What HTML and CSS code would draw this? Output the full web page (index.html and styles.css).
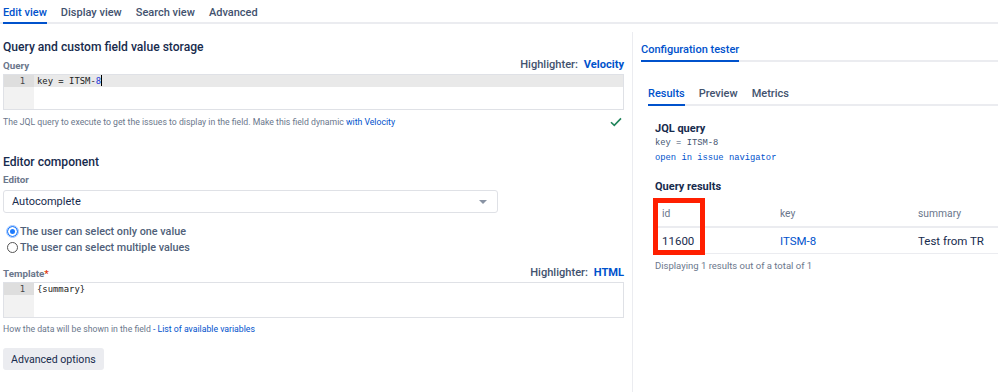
FILE: index.html
```html
<!DOCTYPE html>
<html lang="en">
<head>
    <meta charset="UTF-8">
    <meta name="viewport" content="width=device-width, initial-scale=1.0">
    <title>Field configuration</title>
    <link rel="stylesheet" href="styles.css">
</head>
<body>
    <div class="tabs main-tabs">
        <div class="tab active">Edit view</div>
        <div class="tab">Display view</div>
        <div class="tab">Search view</div>
        <div class="tab">Advanced</div>
    </div>

    <div class="page">
        <div class="editor-col">
            <h2>Query and custom field value storage</h2>
            <div class="field-head">
                <span class="label">Query</span>
                <span class="highlighter">Highlighter: <a>Velocity</a></span>
            </div>
            <div class="code-box">
                <div class="gutter"><div class="ln active">1</div></div>
                <div class="lines">
                    <div class="line active">key = ITSM-<span class="num">8</span><span class="cursor"></span></div>
                </div>
            </div>
            <div class="help">
                <span>The JQL query to execute to get the issues to display in the field. Make this field dynamic <a>with Velocity</a></span>
                <svg class="check" width="12" height="10" viewBox="0 0 12 10"><path d="M1 5.2 L4.3 8.4 L11 1.4" fill="none" stroke="#1f845a" stroke-width="1.6"/></svg>
            </div>

            <h2 class="second">Editor component</h2>
            <div class="label">Editor</div>
            <div class="select">
                <span>Autocomplete</span>
                <span class="caret"></span>
            </div>
            <div class="radios">
                <label class="radio"><span class="dot checked"></span>The user can select only one value</label>
                <label class="radio"><span class="dot"></span>The user can select multiple values</label>
            </div>

            <div class="field-head template">
                <span class="label">Template<span class="req">*</span></span>
                <span class="highlighter">Highlighter: <a>HTML</a></span>
            </div>
            <div class="code-box">
                <div class="gutter"><div class="ln active">1</div></div>
                <div class="lines">
                    <div class="line plain">{summary}</div>
                </div>
            </div>
            <div class="help second-help">
                <span>How the data will be shown in the field <a>- List of available variables</a></span>
            </div>

            <button class="btn">Advanced options</button>
        </div>

        <div class="tester">
            <div class="tabs tester-tabs">
                <div class="tab active">Configuration tester</div>
            </div>
            <div class="tabs result-tabs">
                <div class="tab active">Results</div>
                <div class="tab">Preview</div>
                <div class="tab">Metrics</div>
            </div>
            <div class="results">
                <h3>JQL query</h3>
                <div class="mono">key = ITSM-8</div>
                <div class="mono link">open in issue navigator</div>

                <h3 class="second">Query results</h3>
                <div class="table-wrap">
                    <table>
                        <tr><th>id</th><th>key</th><th>summary</th></tr>
                        <tr><td>11600</td><td><a>ITSM-8</a></td><td>Test from TR</td></tr>
                    </table>
                    <div class="mark"></div>
                </div>
                <div class="count">Displaying 1 results out of a total of 1</div>
            </div>
        </div>
    </div>
</body>
</html>
```

FILE: styles.css
```css
body {
    margin: 0;
    font-family: 'Roboto', 'Liberation Sans', sans-serif;
    color: #172b4d;
    background: #fff;
}
a {
    color: #0052cc;
}
.tabs {
    display: flex;
    border-bottom: 2px solid #ebecf0;
}
.tab {
    font-size: 11px;
    font-weight: 500;
    line-height: 14px;
    color: #42526e;
    padding-bottom: 2px;
    margin-bottom: -2px;
    border-bottom: 2px solid transparent;
    margin-right: 14px;
}
.tab.active {
    color: #0052cc;
    border-bottom-color: #0052cc;
}
.main-tabs {
    padding: 6px 0 0 3px;
}
.page {
    display: grid;
    grid-template-columns: 632px 1fr;
}
.editor-col {
    padding: 15px 8px 0 3px;
}
h2 {
    font-size: 12.1px;
    font-weight: 500;
    line-height: 16px;
    margin: 0 0 3px;
}
h2.second {
    margin-top: 26px;
}
.field-head {
    display: flex;
    justify-content: space-between;
    align-items: flex-end;
    margin-bottom: 2px;
}
.field-head.template {
    margin-top: 11px;
}
.label {
    font-size: 9.8px;
    font-weight: 700;
    line-height: 13px;
    color: #6b778c;
}
.req {
    color: #de350b;
}
.highlighter {
    font-size: 11.1px;
    line-height: 14px;
    color: #42526e;
    font-weight: 500;
}
.highlighter a {
    margin-left: 3px;
    font-weight: 700;
}
.code-box {
    display: flex;
    height: 34px;
    border: 1px solid #dfe1e6;
    font-family: 'DejaVu Sans Mono', monospace;
    font-size: 8.9px;
}
.gutter {
    width: 30px;
    background: #f2f2f2;
    text-align: right;
}
.ln {
    padding-right: 9px;
    line-height: 12px;
    color: #444;
}
.ln.active {
    background: #dedede;
}
.lines {
    flex: 1;
}
.line {
    line-height: 12px;
    padding-left: 3px;
    color: #222;
}
.line.active {
    background: #e9e9e9;
}
.num {
    color: #1d3bd9;
}
.cursor {
    display: inline-block;
    width: 1px;
    height: 11px;
    background: #000;
    vertical-align: -2px;
}
.help {
    display: flex;
    justify-content: space-between;
    align-items: center;
    font-size: 8.7px;
    line-height: 12px;
    color: #6b778c;
    margin-top: 6px;
}
.help.second-help {
    margin-top: 5px;
}
.check {
    margin-right: 2px;
}
.label + .select {
    margin-top: 4px;
}
.select {
    width: 477px;
    height: 21px;
    border: 1px solid #dfe1e6;
    border-radius: 3px;
    display: flex;
    align-items: center;
    justify-content: space-between;
    padding: 0 8px;
    font-size: 11px;
}
.caret {
    width: 0;
    height: 0;
    border-left: 4px solid transparent;
    border-right: 4px solid transparent;
    border-top: 4px solid #8993a4;
    margin-right: 2px;
}
.radios {
    margin-top: 10px;
}
.radio {
    display: flex;
    align-items: center;
    font-size: 10.8px;
    color: #505f79;
    font-weight: 500;
    height: 16px;
}
.dot {
    width: 9px;
    height: 9px;
    border: 1px solid #555;
    border-radius: 50%;
    margin: 0 2px 0 4px;
}
.dot.checked {
    background: #1d7afc;
    border-color: #1d7afc;
    box-shadow: inset 0 0 0 2px #fff;
    outline: 1px solid #9bc3ff;
}
.btn {
    margin-top: 13px;
    background: #ebecf0;
    border: none;
    border-radius: 3px;
    font-family: inherit;
    font-size: 10.6px;
    color: #172b4d;
    padding: 0 8px;
    height: 22px;
}
.tester {
    margin-top: 8px;
    border-left: 1px solid #ebecf0;
    min-height: 360px;
}
.tester-tabs {
    margin-left: 8px;
    padding-top: 11px;
}
.tester-tabs .tab {
    padding-bottom: 3px;
}
.result-tabs {
    margin: 25px 0 0 15px;
}
.result-tabs .tab {
    padding-bottom: 3px;
}
.results {
    padding: 16px 0 0 22px;
}
h3 {
    font-size: 11px;
    font-weight: 700;
    line-height: 14px;
    margin: 0;
}
h3.second {
    margin-top: 14px;
}
.mono {
    font-family: 'Liberation Mono', monospace;
    font-size: 8.8px;
    color: #42526e;
    line-height: 15px;
}
.mono.link {
    color: #0052cc;
}
.table-wrap {
    position: relative;
    margin-top: 6px;
}
table {
    width: 100%;
    border-collapse: collapse;
    font-size: 11.5px;
}
th {
    text-align: left;
    font-weight: 400;
    font-size: 10.3px;
    color: #6b778c;
    height: 26px;
    border-bottom: 2px solid #ebecf0;
    padding: 0 0 0 7px;
}
td {
    height: 25px;
    border-bottom: 1px solid #ebecf0;
    padding: 0 0 0 7px;
}
th:nth-child(1) { width: 111px; }
th:nth-child(2) { width: 131px; }
.mark {
    position: absolute;
    left: -2px;
    top: -2px;
    width: 42px;
    height: 47px;
    border: 5px solid #ff1f00;
}
.count {
    font-size: 9.5px;
    line-height: 12px;
    color: #6b778c;
    margin-top: 6px;
}
```
